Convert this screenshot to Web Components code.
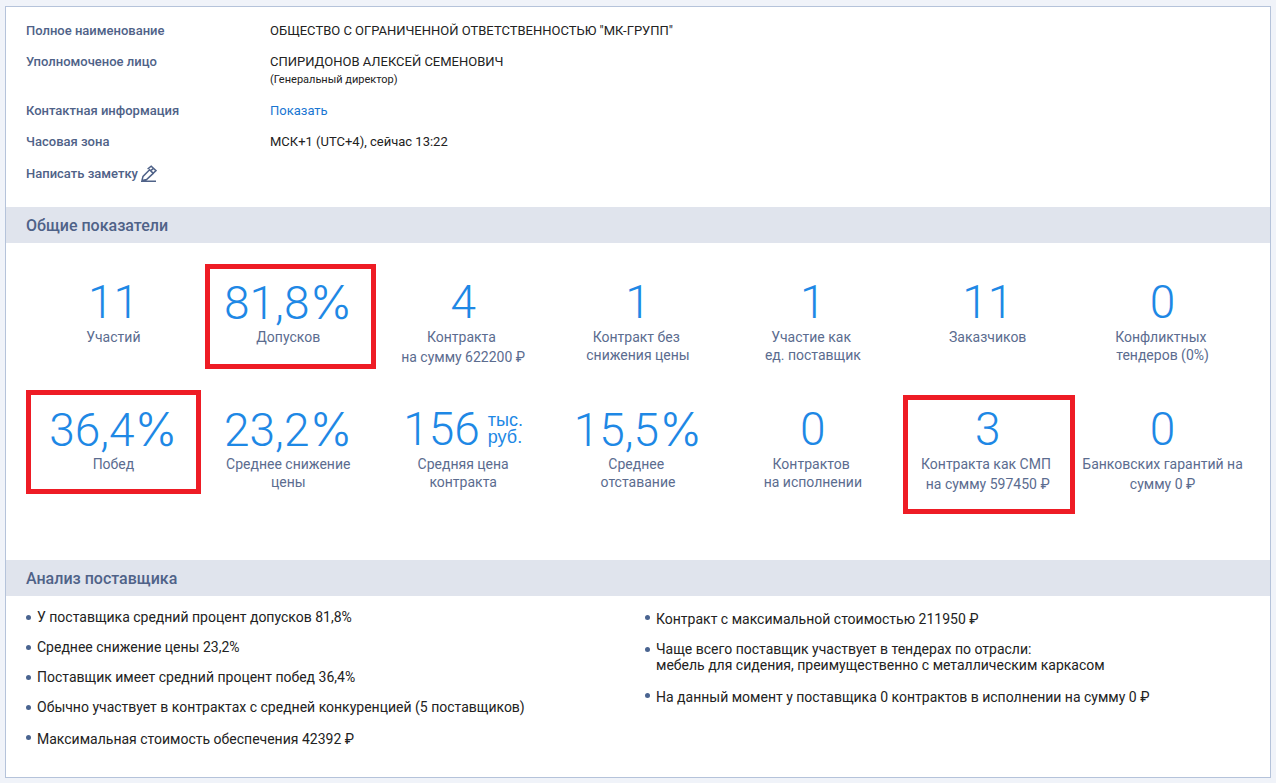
<!DOCTYPE html>
<html lang="ru">
<head>
<meta charset="utf-8">
<title>Карточка поставщика</title>
<style>
  body { margin: 0; background: #f0f3f9; color: #222; font: 14px/18px Roboto, "Liberation Sans", sans-serif; }
  .percent { font-family: Inter, Roboto, sans-serif; }
</style>
</head>
<body>
<supplier-card>
  <detail-list slot="details">
    <detail-row><span slot="label">Полное наименование</span>ОБЩЕСТВО С ОГРАНИЧЕННОЙ ОТВЕТСТВЕННОСТЬЮ "МК-ГРУПП"</detail-row>
    <detail-row><span slot="label">Уполномоченое лицо</span>СПИРИДОНОВ АЛЕКСЕЙ СЕМЕНОВИЧ<span slot="note">(Генеральный директор)</span></detail-row>
    <detail-row><span slot="label">Контактная информация</span><text-link>Показать</text-link></detail-row>
    <detail-row><span slot="label">Часовая зона</span>МСК+1 (UTC+4), сейчас 13:22</detail-row>
    <note-button>Написать заметку</note-button>
  </detail-list>

  <card-section>
    <span slot="title">Общие показатели</span>
    <metric-grid>
      <metric-tile><span slot="value">11</span>Участий</metric-tile>
      <metric-tile marked style="--mark-inset: -16px 0 8px 4px"><span slot="value">81,8<span class="percent">%</span></span>Допусков</metric-tile>
      <metric-tile><span slot="value">4</span>Контракта&nbsp;<br>на сумму 622200 <ruble-sign></ruble-sign></metric-tile>
      <metric-tile><span slot="value">1</span>Контракт без&nbsp;<br>снижения цены</metric-tile>
      <metric-tile><span slot="value">1</span>Участие как&nbsp;<br>ед. поставщик</metric-tile>
      <metric-tile><span slot="value">11</span>Заказчиков</metric-tile>
      <metric-tile><span slot="value">0</span>Конфликтных&nbsp;<br>тендеров (0%)</metric-tile>
      <metric-tile marked style="--mark-inset: -17px 0 10px 0"><span slot="value">36,4<span class="percent">%</span></span>Побед</metric-tile>
      <metric-tile><span slot="value">23,2<span class="percent">%</span></span>Среднее снижение<br>цены</metric-tile>
      <metric-tile><span slot="value">156</span><span slot="unit">тыс.<br>руб.</span>Средняя цена<br>контракта</metric-tile>
      <metric-tile><span slot="value">15,5<span class="percent">%</span></span>Среднее&nbsp;<br>отставание</metric-tile>
      <metric-tile><span slot="value">0</span>Контрактов&nbsp;<br>на исполнении</metric-tile>
      <metric-tile marked style="--mark-inset: -12px 0 -10px 3px"><span slot="value">3</span>Контракта как СМП&nbsp;<br>на сумму 597450 <ruble-sign></ruble-sign></metric-tile>
      <metric-tile><span slot="value">0</span>Банковских гарантий на<br>сумму 0 <ruble-sign></ruble-sign></metric-tile>
    </metric-grid>
  </card-section>

  <card-section>
    <span slot="title">Анализ поставщика</span>
    <fact-columns>
      <fact-item slot="left">У поставщика средний процент допусков 81,8%</fact-item>
      <fact-item slot="left">Среднее снижение цены 23,2%</fact-item>
      <fact-item slot="left">Поставщик имеет средний процент побед 36,4%</fact-item>
      <fact-item slot="left">Обычно участвует в контрактах с средней конкуренцией (5 поставщиков)</fact-item>
      <fact-item slot="left">Максимальная стоимость обеспечения 42392 <ruble-sign></ruble-sign></fact-item>
      <fact-item slot="right">Контракт с максимальной стоимостью 211950 <ruble-sign></ruble-sign></fact-item>
      <fact-item slot="right">Чаще всего поставщик участвует в тендерах по отрасли:<br>мебель для сидения, преимущественно с металлическим каркасом</fact-item>
      <fact-item slot="right">На данный момент у поставщика 0 контрактов в исполнении на сумму 0 <ruble-sign></ruble-sign></fact-item>
    </fact-columns>
  </card-section>
</supplier-card>

<script>
  const define = (name, html, role) => {
    const template = document.createElement('template');
    template.innerHTML = html;
    customElements.define(name, class extends HTMLElement {
      constructor() {
        super();
        this.attachShadow({ mode: 'open' }).append(template.content.cloneNode(true));
      }
      connectedCallback() {
        if (role) this.setAttribute('role', role);
      }
    });
  };

  define('supplier-card', `
    <style>
      :host { display: block; margin: 6px 5px 5px; border: 1px solid #b5c3da; background: #fff; }
    </style>
    <slot name="details"></slot>
    <slot></slot>`);

  define('detail-list', `
    <style>
      :host { display: flex; flex-direction: column; gap: 13px; padding: 15px 20px 23px; font-size: 13px; }
    </style>
    <slot></slot>`);

  define('detail-row', `
    <style>
      :host { display: block; }
      dl { display: grid; grid-template-columns: 244px 1fr; margin: 0; }
      dt { color: #4f6288; font-weight: 500; }
      dd { margin: 0; }
      slot[name="note"] { display: block; font-size: 11px; }
    </style>
    <dl>
      <dt><slot name="label"></slot></dt>
      <dd><slot></slot><slot name="note"></slot></dd>
    </dl>`);

  define('text-link', `
    <style>
      :host { display: inline; }
      a { color: #1976d2; text-decoration: none; }
    </style>
    <a href="#contacts"><slot></slot></a>`);

  define('note-button', `
    <style>
      :host { display: block; }
      button { display: flex; align-items: center; gap: 3px; height: 20px; padding: 0; border: 0; background: none;
               color: #4f6288; font: inherit; font-weight: 500; cursor: pointer; }
      svg { display: block; }
    </style>
    <button type="button"><slot></slot>
      <svg width="16" height="18" viewBox="0 0 16 18" fill="none" stroke="#4f6288" stroke-width="1.5" aria-hidden="true">
        <path d="M0 16.2H15M1 15.4L2 11.4L8.6 4.8L12.2 8.4L5.6 14.6L1 15.4M6.6 4L10.2 1.2L15 5.6L11.4 9M8 4.2L12.4 8.2M10 5.4L12.6 3.4"/>
      </svg>
    </button>`);

  define('card-section', `
    <style>
      :host { display: block; }
      h2 { margin: 0; padding: 9px 20px 7px; background: #e0e4ed; color: #4f6288; font-size: 16px; font-weight: 500; line-height: 20px; }
    </style>
    <section>
      <h2><slot name="title"></slot></h2>
      <slot></slot>
    </section>`);

  define('metric-grid', `
    <style>
      :host { display: grid; grid-template-columns: repeat(7, 1fr); grid-auto-rows: 97px; row-gap: 30px; padding: 37px 20px 56px; }
    </style>
    <slot></slot>`);

  define('metric-tile', `
    <style>
      :host { display: block; position: relative; text-align: center; color: #5b6c8f; white-space: nowrap; }
      .value { display: flex; justify-content: center; align-items: center; gap: 8px; height: 44px; margin-bottom: 4px;
               color: #1e88e5; font-size: 46px; font-weight: 300; line-height: 44px; }
      slot[name="unit"]::slotted(*) { font: 18px/17px "Liberation Sans", Arial, sans-serif; text-align: left; }
      .mark { display: none; }
      :host([marked]) .mark { display: block; position: absolute; inset: var(--mark-inset); border: 5px solid #ee1c25; }
    </style>
    <div class="value"><slot name="value"></slot><slot name="unit"></slot></div>
    <div><slot></slot></div>
    <div class="mark"></div>`);

  define('ruble-sign', `
    <style>
      :host { display: inline-block; margin-top: 2px; }
    </style>₽`);

  define('fact-columns', `
    <style>
      :host { display: grid; grid-template-columns: 1fr 1fr; padding: 13px 20px 30px; line-height: 16px; }
      div { display: flex; flex-direction: column; gap: 14px; }
      .right { padding-left: 7px; }
    </style>
    <div role="list"><slot name="left"></slot></div>
    <div class="right" role="list"><slot name="right"></slot></div>`);

  define('fact-item', `
    <style>
      :host { display: flex; gap: 6px; }
      :host::before { content: ""; flex: none; width: 5px; height: 5px; margin-top: 6px; border-radius: 50%; background: #4a6490; }
    </style>
    <div><slot></slot></div>`, 'listitem');
</script>
</body>
</html>
